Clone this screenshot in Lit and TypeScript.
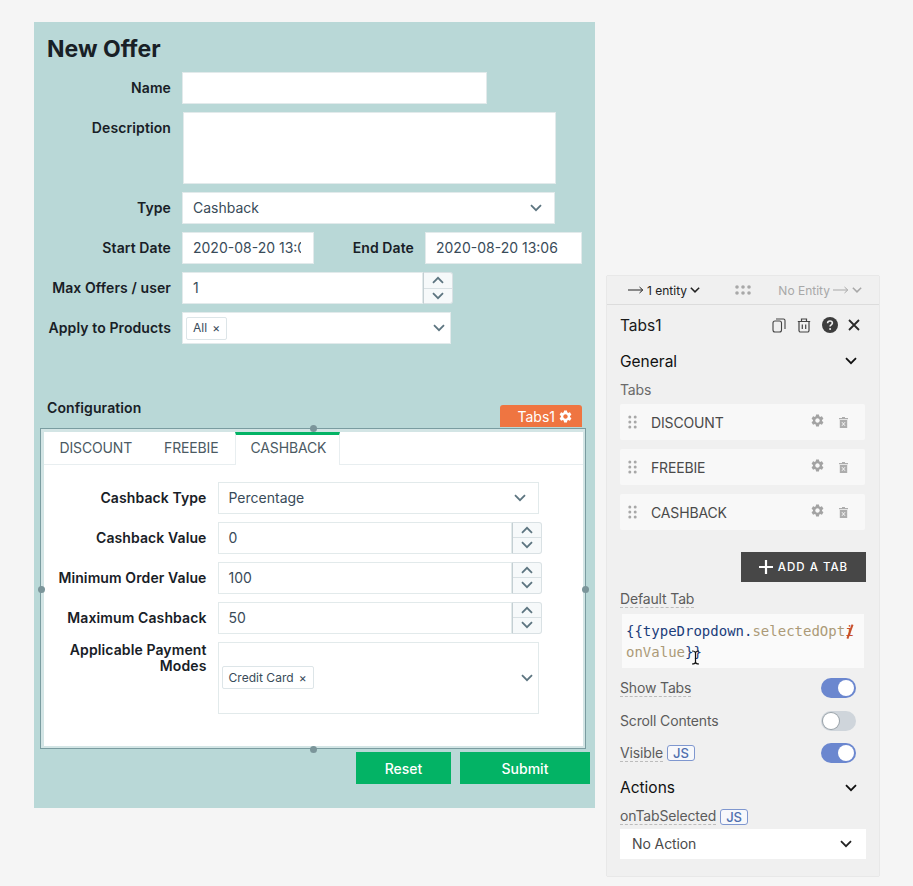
import { LitElement, html, svg, css } from 'lit';
import { customElement } from 'lit/decorators.js';

const chevron = (cls = 'chev') => html`<svg class=${cls} width="12" height="8" viewBox="0 0 12 8"><path d="M1 1.2 6 6.2 11 1.2" fill="none" stroke="currentColor" stroke-width="1.8"/></svg>`;
const chevronUp = html`<svg class="chev" width="12" height="8" viewBox="0 0 12 8"><path d="M1 6.8 6 1.8 11 6.8" fill="none" stroke="currentColor" stroke-width="1.8"/></svg>`;
const gearPath = svg`<path d="M19.14 12.94c.04-.3.06-.61.06-.94 0-.32-.02-.64-.07-.94l2.03-1.58c.18-.14.23-.41.12-.61l-1.92-3.32c-.12-.22-.37-.29-.59-.22l-2.39.96c-.5-.38-1.03-.7-1.62-.94l-.36-2.54c-.04-.24-.24-.41-.48-.41h-3.84c-.24 0-.43.17-.47.41l-.36 2.54c-.59.24-1.13.57-1.62.94l-2.39-.96c-.22-.08-.47 0-.59.22L2.74 8.87c-.12.21-.08.47.12.61l2.03 1.58c-.05.3-.09.63-.09.94s.02.64.07.94l-2.03 1.58c-.18.14-.23.41-.12.61l1.92 3.32c.12.22.37.29.59.22l2.39-.96c.5.38 1.03.7 1.62.94l.36 2.54c.05.24.24.41.48.41h3.84c.24 0 .44-.17.47-.41l.36-2.54c.59-.24 1.13-.56 1.62-.94l2.39.96c.22.08.47 0 .59-.22l1.92-3.32c.12-.22.07-.47-.12-.61l-2.01-1.58zM12 15.6c-1.98 0-3.6-1.62-3.6-3.6s1.62-3.6 3.6-3.6 3.6 1.62 3.6 3.6-1.62 3.6-3.6 3.6z"/>`;
const gear = (size: number) => html`<svg width=${size} height=${size} viewBox="0 0 24 24" fill="currentColor">${gearPath}</svg>`;
const arrow = html`<svg width="16" height="8" viewBox="0 0 16 8"><path d="M0 4H14.5M11.5 1 14.8 4 11.5 7" fill="none" stroke="currentColor" stroke-width="1"/></svg>`;

const stepper = html`<div class="stepper"><div>${chevronUp}</div><div>${chevron()}</div></div>`;

@customElement('app-root')
export class AppRoot extends LitElement {
  static styles = css`
    :host {
      display: block;
      width: 913px;
      height: 886px;
      background: #f5f5f5;
      font-family: Inter, 'Liberation Sans', sans-serif;
      font-size: 14px;
      overflow: hidden;
    }
    .page { display: flex; align-items: flex-start; padding: 22px 0 0 34px; }

    .form { width: 561px; height: 786px; background: #b9d8d7; color: #182026; }
    .title { height: 50px; padding: 14px 0 0 13px; box-sizing: border-box; font-size: 23px; line-height: 26px; font-weight: 700; }
    .row { display: flex; align-items: center; height: 32px; margin-bottom: 8px; }
    .row.top { align-items: flex-start; }
    .label { width: 137px; margin-right: 11px; text-align: right; font-weight: 600; flex: none; line-height: 16px; letter-spacing: .1px; }
    .desc-label { padding-top: 8px; }
    .tab-label { width: 163px; }
    .field {
      display: flex;
      align-items: center;
      justify-content: space-between;
      box-sizing: border-box;
      height: 32px;
      padding: 0 12px 0 10px;
      background: #fff;
      border: 1px solid #e2eaeb;
      color: #394b59;
      line-height: 16px;
      flex: none;
    }
    .field.tight { padding: 0 5px 0 3px; }
    .clip { overflow: hidden; white-space: nowrap; }
    .field .clip { width: 100%; }
    .chev { color: #5d7580; flex: none; }
    .stepper { width: 30px; height: 32px; box-sizing: border-box; border: 1px solid #d9e1e4; border-left-color: #c4cfd3; border-radius: 0 3px 3px 0; flex: none; display: flex; flex-direction: column; background: #f6f9fa; }
    .stepper div { flex: 1; display: flex; align-items: center; justify-content: center; }
    .stepper div + div { border-top: 1px solid #d9e1e4; }
    .chip { display: inline-flex; align-items: center; height: 23px; box-sizing: border-box; padding: 0 6px; border: 1px solid #dde5e8; border-radius: 2px; background: #fff; font-size: 12px; letter-spacing: .03px; color: #394b59; }
    .chip span { margin-left: 5px; }
    .end-label { width: 62px; margin: 0 11px 0 38px; }

    .config-head { margin-top: 54px; height: 20px; line-height: 20px; padding-left: 13px; font-weight: 600; letter-spacing: .1px; }
    .box {
      position: relative;
      box-sizing: border-box;
      width: 546px;
      height: 321px;
      margin: 10px 0 0 6px;
      padding: 2.5px;
      background: #d3e5e5;
      border: 1.5px solid #7a9ca0;
    }
    .inner { height: 100%; background: #fff; }
    .tabs { display: flex; height: 32px; border-bottom: 1px solid #e8eef0; color: #4b5a63; letter-spacing: -.15px; }
    .tab { padding: 3px 16px 0; line-height: 26px; }
    .tab.active { margin-left: 1px; padding: 0 14px; box-sizing: border-box; width: 105px; height: 33px; border-top: 3px solid #03b365; border-left: 1px solid #e8eef0; border-right: 1px solid #e8eef0; background: #fff; }
    .tab-body { padding-top: 17px; }
    .tag { position: absolute; top: -24px; right: 3px; width: 82px; height: 22px; box-sizing: border-box; padding-right: 9px; display: flex; align-items: center; justify-content: flex-end; gap: 3px; background: #ef7541; color: #fff; border-radius: 3px 3px 0 0; }
    .handle { position: absolute; width: 7px; height: 7px; border-radius: 50%; background: #7b959a; }
    .buttons { display: flex; justify-content: flex-end; gap: 9px; margin: 3px 5px 0 0; }
    .btn { height: 32px; display: flex; align-items: center; justify-content: center; background: #03b365; color: #fff; font-weight: 500; }

    .panel { width: 272px; height: 600px; margin: 254px 0 0 12px; box-sizing: border-box; background: #f0f0f0; box-shadow: 0 0 1px rgba(0,0,0,.3); color: #1a1a1a; }
    .bar { display: flex; align-items: center; height: 28px; padding: 0 17px 0 21px; border-bottom: 1px solid #dcdcdc; font-size: 12px; color: #222; }
    .bar .link { display: flex; align-items: center; gap: 3px; }
    .bar .chev { width: 10px; color: inherit; }
    .bar .muted { color: #a8a8a8; margin-left: auto; }
    .grip { margin-left: 35px; color: #a8a8a8; display: flex; }
    .content { padding: 0 13px; }
    .head { display: flex; align-items: center; justify-content: space-between; font-size: 15.5px; }
    .name-row { height: 40px; padding-right: 5px; }
    .section { height: 32px; padding-right: 9px; color: #111; }
    .section .chev { color: #111; }
    .icons { display: flex; align-items: center; gap: 7px; color: #444; }
    .sub { height: 25px; line-height: 26px; margin-bottom: 2px; color: #6a6a6a; letter-spacing: -.15px; }
    .item { display: flex; align-items: center; height: 36px; width: 245px; margin-bottom: 9px; background: #f8f8f8; border-radius: 2px; color: #4a4a4a; letter-spacing: -.15px; }
    .item .drag { margin-left: 8px; color: #a8a8a8; display: flex; }
    .item .text { margin-left: 14px; flex: 1; }
    .item .cog { color: #a3a3a3; display: flex; margin: -4px 14px 0 0; }
    .item .bin { color: #adadad; display: flex; margin-right: 17px; }
    .add { display: flex; align-items: center; justify-content: center; gap: 5px; width: 125px; height: 30px; margin: 22px 0 7px auto; background: #474747; color: #fff; font-size: 11.5px; font-weight: 500; letter-spacing: 1px; }
    .dashed { display: inline-block; color: #5c5c5c; line-height: 16px; border-bottom: 1px dashed #bcbcbc; letter-spacing: -.15px; }
    .prop { height: 20px; display: flex; align-items: center; gap: 4px; }
    .code { position: relative; box-sizing: border-box; width: 242px; height: 54px; margin: 5px 0 4px 2px; padding: 7px 0 0 4px; background: #fafafa; font-family: 'DejaVu Sans Mono', 'Liberation Mono', monospace; font-size: 14px; line-height: 21px; color: #1c3d7a; }
    .code .tan { color: #ac9a78; }
    .code .red { position: relative; display: inline-block; color: #c8502b; }
    .code .red::after { content: ''; position: absolute; left: 50%; top: 3px; width: 1.5px; height: 15px; background: #c8502b; transform: rotate(20deg); }
    .beam { position: absolute; left: 69px; top: 36px; }
    .toggle-row { display: flex; align-items: center; justify-content: space-between; height: 32.5px; }
    .switch { width: 35px; height: 20px; margin-right: 10px; border-radius: 10px; background: #6b87cf; display: flex; align-items: center; justify-content: flex-end; padding: 0 2px; box-sizing: border-box; }
    .switch i { width: 16px; height: 16px; border-radius: 50%; background: #fff; }
    .switch.off { background: #cfd5db; justify-content: flex-start; }
    .switch.off i { box-shadow: 0 0 0 1px #9aa3a9; }
    .js { display: inline-flex; align-items: center; justify-content: center; box-sizing: border-box; width: 28px; height: 16px; border: 1px solid #7f97cf; border-radius: 3px; font-size: 13px; font-weight: 500; color: #4f6fae; background: #f7f8fb; }
    .action-select { display: flex; align-items: center; justify-content: space-between; height: 30px; margin-top: 2px; padding: 0 14px 0 12px; background: #fff; color: #4a4a4a; letter-spacing: -.1px; }
    .action-select .chev { color: #222; }
  `;

  private dots() {
    return html`<svg width="9" height="14" viewBox="0 0 9 14" fill="currentColor">
      ${[2, 7, 12].map((y) => svg`<circle cx="1.8" cy=${y} r="1.5"/><circle cx="7.2" cy=${y} r="1.5"/>`)}
    </svg>`;
  }

  private bin() {
    return html`<svg width="9" height="11" viewBox="0 0 9 11"><path d="M3 0H6V1H9V2.2H0V1H3Z" fill="currentColor"/><path d="M.8 3H8.2V11H.8Z" fill="currentColor"/><path d="M3 5.2 6 8.800M6 5.200 3 8.800" stroke="#f8f8f8" stroke-width="1"/></svg>`;
  }

  private tabItem(name: string) {
    return html`<div class="item">
      <span class="drag">${this.dots()}</span>
      <span class="text">${name}</span>
      <span class="cog">${gear(15)}</span>
      <span class="bin">${this.bin()}</span>
    </div>`;
  }

  private numberRow(label: string, value: string) {
    return html`<div class="row">
      <div class="label tab-label">${label}</div>
      <div class="field" style="width:294px">${value}</div>${stepper}
    </div>`;
  }

  render() {
    return html`<div class="page">
      <div class="form">
        <div class="title">New Offer</div>
        <div class="row"><div class="label">Name</div><div class="field" style="width:305px"></div></div>
        <div class="row top" style="height:72px">
          <div class="label desc-label">Description</div>
          <div class="field" style="width:373px;height:72px;margin-left:1px"></div>
        </div>
        <div class="row"><div class="label">Type</div><div class="field" style="width:373px">Cashback ${chevron()}</div></div>
        <div class="row">
          <div class="label">Start Date</div>
          <div class="field" style="width:132px"><div class="clip">2020-08-20 13:06</div></div>
          <div class="label end-label">End Date</div>
          <div class="field" style="width:157px"><div class="clip">2020-08-20 13:06</div></div>
        </div>
        <div class="row"><div class="label">Max Offers / user</div><div class="field" style="width:241px">1</div>${stepper}</div>
        <div class="row">
          <div class="label">Apply to Products</div>
          <div class="field tight" style="width:269px"><div class="chip">All<span>×</span></div>${chevron()}</div>
        </div>
        <div class="config-head">Configuration</div>
        <div class="box">
          <div class="tag">Tabs1 ${gear(15)}</div>
          <div class="handle" style="top:-4px;left:269px"></div>
          <div class="handle" style="top:157px;left:-3px"></div>
          <div class="handle" style="top:157px;right:-4px"></div>
          <div class="handle" style="bottom:-5px;left:269px"></div>
          <div class="inner">
            <div class="tabs">
              <div class="tab">DISCOUNT</div>
              <div class="tab">FREEBIE</div>
              <div class="tab active">CASHBACK</div>
            </div>
            <div class="tab-body">
              <div class="row">
                <div class="label tab-label">Cashback Type</div>
                <div class="field" style="width:321px">Percentage ${chevron()}</div>
              </div>
              ${this.numberRow('Cashback Value', '0')}
              ${this.numberRow('Minimum Order Value', '100')}
              ${this.numberRow('Maximum Cashback', '50')}
              <div class="row top" style="height:72px">
                <div class="label tab-label">Applicable Payment Modes</div>
                <div class="field tight" style="width:321px;height:72px"><div class="chip">Credit Card<span>×</span></div>${chevron()}</div>
              </div>
            </div>
          </div>
        </div>
        <div class="buttons">
          <div class="btn" style="width:95px">Reset</div>
          <div class="btn" style="width:130px">Submit</div>
        </div>
      </div>

      <div class="panel">
        <div class="bar">
          <span class="link">${arrow} 1 entity ${chevron()}</span>
          <span class="grip"><svg width="16" height="10" viewBox="0 0 16 10" fill="currentColor">${[2, 8, 14].map((x) => svg`<circle cx=${x} cy="2" r="1.8"/><circle cx=${x} cy="8" r="1.8"/>`)}</svg></span>
          <span class="link muted">No Entity ${arrow} ${chevron()}</span>
        </div>
        <div class="content">
          <div class="head name-row">
            <span>Tabs1</span>
            <span class="icons">
              <svg width="14" height="15" viewBox="0 0 14 15" fill="none" stroke="currentColor" stroke-width="1.1" style="margin-right:4px"><rect x="1" y="3" width="8.5" height="11" rx="2"/><path d="M4 1H11.5A1.5 1.5 0 0 1 13 2.5V11"/></svg>
              <svg width="14" height="15" viewBox="0 0 14 15" fill="none" stroke="currentColor" stroke-width="1.2" style="margin-right:4px"><path d="M.8 3.5H13.2M4.5 3.5V1H9.5V3.5M2 3.5V12.500A1.500 1.500 0 0 0 3.500 14H10.500A1.500 1.500 0 0 0 12 12.500V3.500M5.300 6.500V11M8.700 6.500V11"/></svg>
              <svg width="16" height="16" viewBox="0 0 16 16"><circle cx="8" cy="8" r="8" fill="#3d3d3d"/><path d="M5.600 6.200C5.600 4.800 6.700 4 8 4s2.400.8 2.400 2.100c0 1.900-2.300 1.800-2.300 3.400" fill="none" stroke="#f0f0f0" stroke-width="1.600"/><circle cx="8.100" cy="12" r="1" fill="#f0f0f0"/></svg>
              <svg width="14" height="14" viewBox="0 0 14 14" style="margin-left:2px"><path d="M2 2 12 12M12 2 2 12" stroke="#2a2a2a" stroke-width="1.800"/></svg>
            </span>
          </div>
          <div class="head section"><span>General</span>${chevron()}</div>
          <div class="sub">Tabs</div>
          ${this.tabItem('DISCOUNT')}
          ${this.tabItem('FREEBIE')}
          ${this.tabItem('CASHBACK')}
          <div class="add">
            <svg width="14" height="14" viewBox="0 0 14 14"><path d="M7 0V14M0 7H14" stroke="#fff" stroke-width="2.200"/></svg>
            ADD A TAB
          </div>
          <div class="prop"><span class="dashed">Default Tab</span></div>
          <div class="code">
            <div>{{typeDropdown.<span class="tan">selectedOpt</span><span class="red">i</span></div>
            <div><span class="tan">onValue</span>}}</div>
            <svg class="beam" width="9" height="15" viewBox="0 0 9 15"><path d="M1 1C3 1 4.500 1.500 4.500 3V12C4.500 13.500 3 14 1 14M8 1C6 1 4.500 1.500 4.500 3M4.500 12C4.500 13.500 6 14 8 14" fill="none" stroke="#111" stroke-width="1.200"/></svg>
          </div>
          <div class="toggle-row"><span class="dashed">Show Tabs</span><div class="switch"><i></i></div></div>
          <div class="toggle-row"><span class="dashed" style="border:0">Scroll Contents</span><div class="switch off"><i></i></div></div>
          <div class="toggle-row"><span class="prop"><span class="dashed">Visible</span><span class="js">JS</span></span><div class="switch"><i></i></div></div>
          <div class="head section" style="margin-top:2px"><span>Actions</span>${chevron()}</div>
          <div class="prop" style="margin-top:3px"><span class="dashed">onTabSelected</span><span class="js">JS</span></div>
          <div class="action-select">No Action ${chevron()}</div>
        </div>
      </div>
    </div>`;
  }
}
